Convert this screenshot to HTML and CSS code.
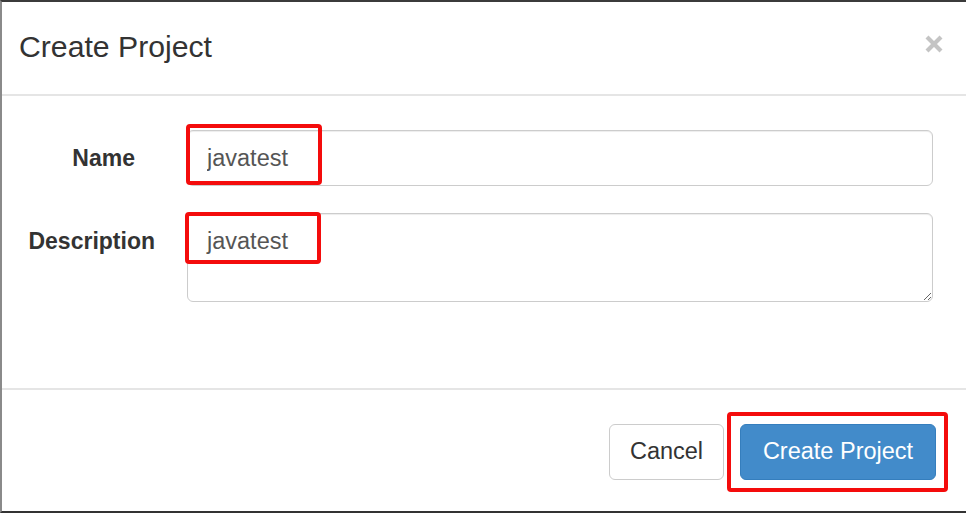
FILE: index.html
```html
<!DOCTYPE html>
<html lang="en">
<head>
<meta charset="utf-8">
<title>Create Project</title>
<link rel="stylesheet" href="styles.css">
</head>
<body>
<div class="modal">
  <div class="modal-header">
    <h4 class="modal-title">Create Project</h4>
    <button class="close" type="button" aria-label="Close">
      <svg width="18" height="18" viewBox="0 0 18 18"><path d="M2 2 L16 16 M16 2 L2 16" stroke="#c4c4c4" stroke-width="4.2" stroke-linecap="butt"/></svg>
    </button>
  </div>
  <div class="modal-body">
    <form class="form">
      <label class="label label-name" for="name">Name</label>
      <div class="field">
        <input class="control" id="name" type="text" value="javatest">
        <span class="mark mark-name"></span>
      </div>
      <label class="label" for="desc">Description</label>
      <div class="field">
        <textarea class="control area" id="desc">javatest</textarea>
        <span class="mark mark-desc"></span>
      </div>
    </form>
  </div>
  <div class="modal-footer">
    <button class="btn btn-default" type="button">Cancel</button>
    <div class="btn-wrap">
      <button class="btn btn-primary" type="button">Create Project</button>
      <span class="mark mark-btn"></span>
    </div>
  </div>
</div>
</body>
</html>
```
FILE: styles.css
```css
html, body {
  margin: 0;
  padding: 0;
  background: #fff;
}
body {
  font-family: "Liberation Sans", Arial, sans-serif;
  color: #333;
}
.modal {
  box-sizing: border-box;
  width: 966px;
  height: 513px;
  border-top: 2px solid #3b3b3b;
  border-left: 2px solid #8a8a8a;
  border-bottom: 2px solid #333;
  display: flex;
  flex-direction: column;
  background: #fff;
}
.modal-header {
  box-sizing: border-box;
  height: 94px;
  border-bottom: 2px solid #e5e5e5;
  display: flex;
  align-items: center;
  justify-content: space-between;
  padding: 0 23px 2px 17px;
}
.modal-title {
  margin: 0;
  font-size: 30.2px;
  font-weight: normal;
  line-height: 1;
  color: #333;
}
.close {
  border: 0;
  background: transparent;
  padding: 0;
  margin: 0;
  width: 18px;
  height: 18px;
  display: block;
  margin-top: -6px;
}
.close svg {
  display: block;
  filter: blur(0.4px);
}
.modal-body {
  box-sizing: border-box;
  height: 292px;
  padding-top: 34px;
}
.form {
  display: grid;
  grid-template-columns: 153px 746px;
  column-gap: 32px;
  row-gap: 27px;
  margin: 0;
}
.label {
  font-weight: bold;
  font-size: 23px;
  text-align: right;
  line-height: 56px;
  height: 56px;
  color: #333;
}
.label-name {
  padding-right: 20px;
}
.field {
  position: relative;
}
.control {
  box-sizing: border-box;
  display: block;
  width: 746px;
  height: 56px;
  margin: 0;
  padding: 0 19px;
  border: 1px solid #ccc;
  border-radius: 6px;
  font-family: "Liberation Sans", Arial, sans-serif;
  font-size: 23.5px;
  color: #555;
  background: #fff;
  box-shadow: inset 0 1px 1px rgba(0,0,0,0.075);
  outline: none;
}
.area {
  height: 89px;
  padding: 11px 19px 9px;
  line-height: 33px;
  resize: vertical;
}
.mark {
  position: absolute;
  box-sizing: border-box;
  border: 4px solid #f40c0c;
  border-radius: 4px;
  pointer-events: none;
}
.mark-name {
  left: -1px;
  top: -6px;
  width: 136px;
  height: 61px;
}
.mark-desc {
  left: -2px;
  top: -1px;
  width: 136px;
  height: 52px;
}
.modal-footer {
  flex: 1;
  box-sizing: border-box;
  border-top: 2px solid #e5e5e5;
  display: flex;
  justify-content: flex-end;
  align-items: flex-start;
  gap: 16px;
  padding: 34px 30px 0 0;
}
.btn {
  box-sizing: border-box;
  height: 56px;
  margin: 0;
  border-radius: 6px;
  font-family: "Liberation Sans", Arial, sans-serif;
  font-size: 23.5px;
  line-height: 1;
  cursor: pointer;
}
.btn-default {
  width: 115px;
  background: #fff;
  border: 1px solid #ccc;
  color: #333;
}
.btn-wrap {
  position: relative;
}
.btn-primary {
  display: block;
  width: 196px;
  background: #428bca;
  border: 1px solid #357ebd;
  color: #fff;
}
.mark-btn {
  left: -13px;
  top: -12px;
  width: 221px;
  height: 80px;
}
```
